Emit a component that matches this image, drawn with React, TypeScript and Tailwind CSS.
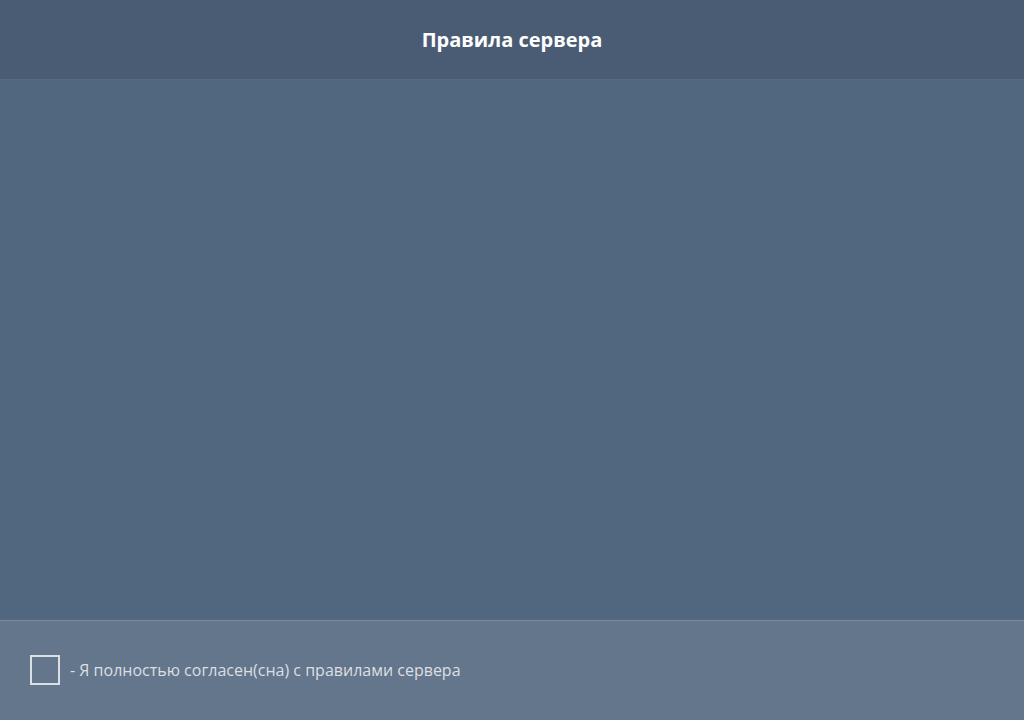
export default function App() {
  return (
    <div className="flex h-[720px] w-[1024px] flex-col font-['Open_Sans',sans-serif]">
      {/* Header */}
      <header className="flex h-[80px] shrink-0 items-center justify-center border-b border-[#576a82] bg-[#4a5c74]">
        <h1 className="text-[20px] font-bold text-white">Правила сервера</h1>
      </header>

      {/* Rules body */}
      <main className="flex-1 bg-[#50677f]" />

      {/* Agreement */}
      <footer className="flex h-[100px] shrink-0 items-center gap-[10px] border-t border-[#7a8aa0] bg-[#64768b] pb-[1px] pl-[30px]">
        <div className="h-[30px] w-[30px] border-2 border-[#dcdfe3]" />
        <span className="text-[16px] text-[#dcdfe3]">- Я полностью согласен(сна) с правилами сервера</span>
      </footer>
    </div>
  );
}
